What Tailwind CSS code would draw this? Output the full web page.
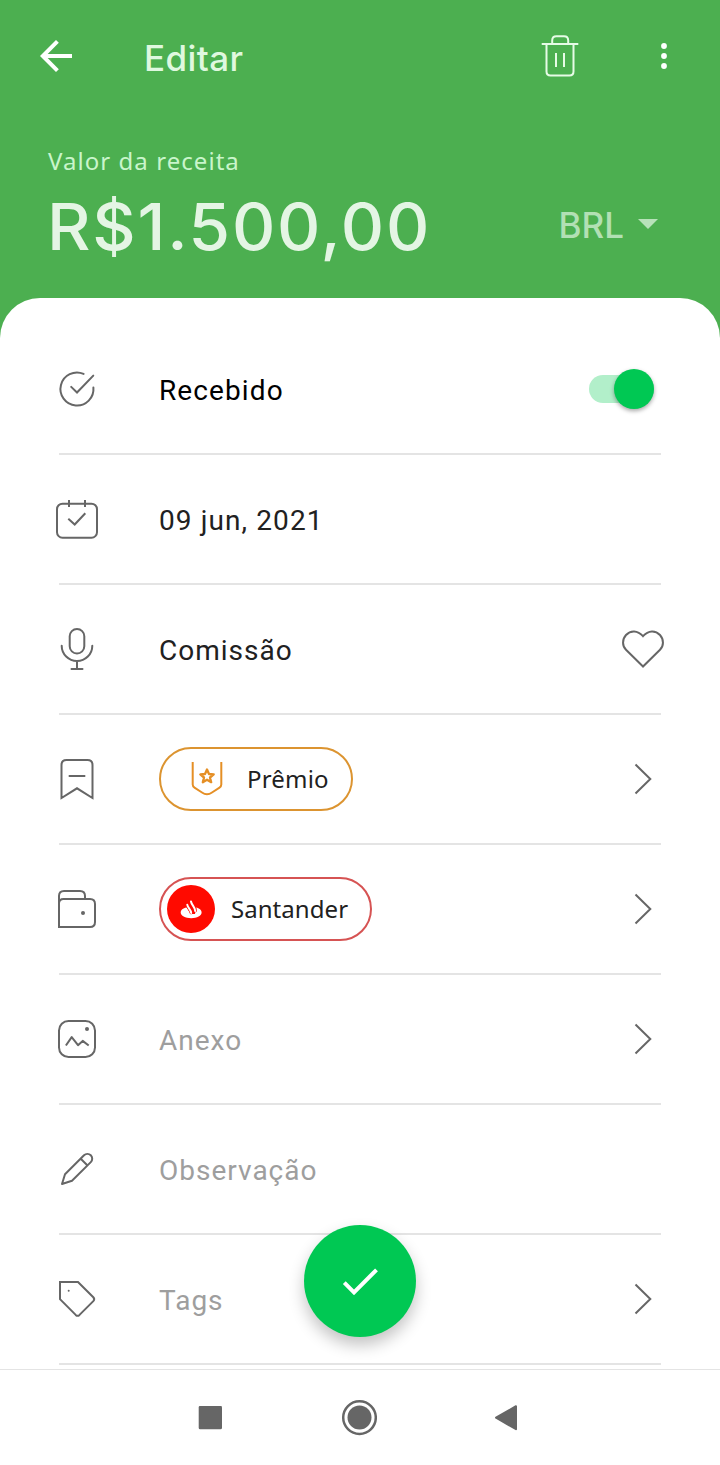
<!DOCTYPE html>
<html lang="pt-BR">
<head>
<meta charset="utf-8">
<title>Editar</title>
<script src="https://cdn.jsdelivr.net/npm/@tailwindcss/browser@4"></script>
</head>
<body class="bg-[#4caf50]">
<div class="relative flex h-[1465px] w-[720px] flex-col overflow-hidden bg-[#4caf50]">
  <header class="flex h-[298px] shrink-0 flex-col">
    <div class="flex h-28 items-center pl-10">
      <svg class="h-8 w-8 shrink-0 text-white" viewBox="0 0 32 32" fill="none" stroke="currentColor" stroke-width="4"><path d="M32 16H3M17.4 1.4L2.8 16l14.6 14.6"/></svg>
      <h1 class="ml-[72px] mt-[3px] font-[Inter] text-[35px] font-medium leading-[42px] tracking-[0.4px] text-[#dff8df]">Editar</h1>
      <div class="ml-auto flex items-center">
        <svg class="h-[44px] w-[40px] text-[#e6fbe6]" viewBox="540 34 40 44" fill="none" stroke="currentColor" stroke-width="2"><path d="M541.7 44H578.3M546.500 44V71.500Q546.500 75.500 550.500 75.500H569.500Q573.500 75.500 573.500 71.500V44M552.200 44V40.500Q552.200 36.300 556.400 36.300H564Q568.200 36.300 568.200 40.500V44M556 53V67M564 53V67"/></svg>
        <svg class="ml-[80px] mr-[52px] h-8 w-2 overflow-visible text-white" viewBox="0 0 8 32" fill="currentColor"><circle cx="4" cy="6" r="2.900"/><circle cx="4" cy="16" r="2.900"/><circle cx="4" cy="26" r="2.900"/></svg>
      </div>
    </div>
    <p class="ml-12 mt-[33px] font-['Noto_Sans'] text-[24px] leading-8 tracking-[1.05px] text-[#c9f5cb]">Valor da receita</p>
    <div class="flex h-24 items-center pl-[47px]">
      <p class="mt-[4px] origin-left scale-x-[1.05] font-[Inter] text-[64px] font-medium leading-[80px] tracking-[1.7px] text-[#e4f5e4]">R$1.500,00</p>
      <div class="ml-auto mr-[62px] flex items-center">
        <span class="font-[Inter] text-[35px] font-medium leading-10 text-[#b2e0b4]">BRL</span>
        <svg class="ml-[14px] h-[10px] w-5 -translate-y-px" viewBox="0 0 20 10" fill="#b7e2b9"><path d="M0 0H20L10 10Z"/></svg>
      </div>
    </div>
  </header>

  <main class="flex h-[1071px] shrink-0 flex-col rounded-t-[40px] bg-white px-[59px] pt-[27px] font-[Roboto] text-[28px] leading-9 tracking-[1px] text-[#212121]">
    <div class="flex h-[130px] shrink-0 items-center border-b-2 border-[#e4e4e4]">
      <svg class="h-9 w-9 shrink-0 overflow-visible" viewBox="0 0 36 36" fill="none" stroke="#666" stroke-width="2" stroke-linecap="round"><path d="M24.600 2.900A16.500 16.500 0 1 0 34.400 16.500M12.200 15.900L18 21.500L34.300 4.600"/></svg>
      <span class="ml-16 mt-[3px] tracking-[1.1px] text-black">Recebido</span>
      <span class="ml-auto mr-[7px] flex h-7 w-[65px] items-center justify-end rounded-full bg-[#b2efca]"><span class="h-10 w-10 rounded-full bg-[#00c853] shadow-[0_2px_4px_rgba(0,0,0,0.35)]"></span></span>
    </div>
    <div class="flex h-[130px] shrink-0 items-center border-b-2 border-[#e4e4e4]">
      <svg class="h-9 w-9 shrink-0 overflow-visible" viewBox="0 0 36 36" fill="none" stroke="#666" stroke-width="2"><rect x="-2" y="2.700" width="40" height="34" rx="5.500"/><path d="M10-1V6M26-1V6M9.300 17.700L15.700 23.500L26.300 12.300"/></svg>
      <span class="ml-16 mt-[3px] tracking-[1.1px]">09 jun, 2021</span>
    </div>
    <div class="flex h-[130px] shrink-0 items-center border-b-2 border-[#e4e4e4]">
      <svg class="h-9 w-9 shrink-0 overflow-visible" viewBox="0 0 36 36" fill="none" stroke="#666" stroke-width="2" stroke-linecap="round"><rect x="10.700" y="-2" width="14.600" height="24.500" rx="7.300"/><path d="M2.700 14.700A15.300 15.300 0 0 0 33.300 14.700M18 30V38M12.500 38H23.500"/></svg>
      <span class="ml-16 mt-[3px]">Comissão</span>
      <svg class="-mr-1 ml-auto h-10 w-11" viewBox="621 629 44 40" fill="none" stroke="#666" stroke-width="2"><path d="M643 666.500L626 649.700C622.200 646 621.900 639.500 626 635C630.500 630.200 637.500 630 643 636.200C648.500 630 655.500 630.200 660 635C664.100 639.500 663.800 646 660 649.700Z"/></svg>
    </div>
    <div class="flex h-[130px] shrink-0 items-center border-b-2 border-[#e4e4e4]">
      <svg class="h-9 w-9 shrink-0 overflow-visible" viewBox="0 0 36 36" fill="none" stroke="#666" stroke-width="2"><path d="M2.500 37V4Q2.500-1 7.500-1H28.500Q33.500-1 33.500 4V37L18 27.300ZM9.700 15H26.300"/></svg>
      <span class="ml-16 flex h-16 w-[194px] items-center rounded-full border-2 border-[#dc9430] pl-[30px]">
        <svg class="h-9 w-8 shrink-0" viewBox="0 0 32 36" fill="none" stroke="#e58f25" stroke-width="2"><path d="M1.700 1V23.500Q1.700 25.500 3.500 26.600L11 31.500Q16 35 21 31.500L28.500 26.600Q30.300 25.500 30.300 23.500V1"/><path stroke-linejoin="round" stroke-width="2.300" d="M16 8.500L18 13L22.700 13.400L19 16.500L20.200 21.200L16 18.700L11.800 21.200L13 16.500L9.300 13.400L14 13Z"/></svg>
        <span class="ml-6 font-['Noto_Sans'] text-[24px] tracking-[0.2px]">Prêmio</span>
      </span>
      <svg class="ml-auto mr-[9px] h-8 w-[18px]" viewBox="0 0 18 32" fill="none" stroke="#666" stroke-width="2"><path d="M1.500 1.500L16.300 16L1.500 30.500"/></svg>
    </div>
    <div class="flex h-[130px] shrink-0 items-center border-b-2 border-[#e4e4e4]">
      <svg class="h-9 w-9 shrink-0 overflow-visible" viewBox="0 0 36 36" fill="none" stroke="#666" stroke-width="2"><path d="M0 12.500Q0 8 4.500 8H31Q36 8 36 13V31Q36 36 31 36H0V5Q0 0 5 0H21Q26 0 26 5V8"/><circle cx="24" cy="22" r="2" fill="#666" stroke="none"/></svg>
      <span class="ml-16 flex h-16 w-[213px] items-center rounded-full border-2 border-[#d65353] pl-[6px]">
        <svg class="h-12 w-12 shrink-0" viewBox="0 0 48 48"><circle cx="24" cy="24" r="24" fill="#ff0a00"/><path fill="#fff" d="M19.500 22.500C16 23 13.700 25.200 13.700 27.600C13.700 30.800 18.300 33.200 24.200 33.200S34.600 30.800 34.600 27.600C34.600 25.200 32.300 23.200 29 22.600L28 29H24Z"/><path fill="none" stroke="#ff0a00" stroke-width="3.400" stroke-linecap="round" d="M20.800 20.500C21.500 23 23.500 25 24.200 27.500M25 17C25.500 20.500 28.500 22.500 28.200 25.500"/><path fill="none" stroke="#fff" stroke-width="2" stroke-linecap="round" d="M20.300 19.800C20.500 22.500 24 24.500 24.200 28M24 16.500C24.500 20 28.500 22.500 28.200 26"/></svg>
        <span class="ml-4 font-['Noto_Sans'] text-[24px] tracking-[0.05px]">Santander</span>
      </span>
      <svg class="ml-auto mr-[9px] h-8 w-[18px]" viewBox="0 0 18 32" fill="none" stroke="#666" stroke-width="2"><path d="M1.500 1.500L16.300 16L1.500 30.500"/></svg>
    </div>
    <div class="flex h-[130px] shrink-0 items-center border-b-2 border-[#e4e4e4]">
      <svg class="h-9 w-9 shrink-0 overflow-visible" viewBox="0 0 36 36" fill="none" stroke="#666" stroke-width="2"><rect x="0" y="0" width="36" height="36" rx="9.500"/><path stroke-linejoin="round" d="M6.900 24.500L12.700 16.100L19 24.200L23.700 19.900L29.700 24.500"/><circle cx="28" cy="8" r="2" fill="#666" stroke="none"/></svg>
      <span class="ml-16 mt-[3px] text-[#9e9e9e]">Anexo</span>
      <svg class="ml-auto mr-[9px] h-8 w-[18px]" viewBox="0 0 18 32" fill="none" stroke="#666" stroke-width="2"><path d="M1.500 1.500L16.300 16L1.500 30.500"/></svg>
    </div>
    <div class="flex h-[130px] shrink-0 items-center border-b-2 border-[#e4e4e4]">
      <svg class="h-9 w-9 shrink-0 overflow-visible" viewBox="0 0 36 36" fill="none" stroke="#666" stroke-width="2" stroke-linejoin="round"><path d="M3 33L6 23.300L25 4.300A4.800 4.800 0 0 1 31.800 11.100L13 29.700ZM22 8L28 14"/></svg>
      <span class="ml-16 mt-[3px] text-[#9e9e9e]">Observação</span>
    </div>
    <div class="flex h-[130px] shrink-0 items-center border-b-2 border-[#e4e4e4]">
      <svg class="h-9 w-9 shrink-0 overflow-visible" viewBox="0 0 36 36" fill="none" stroke="#666" stroke-width="2"><path d="M1 1H19L34.300 16.300Q36.100 18.200 34.300 20.100L20.500 33.900Q18.600 35.700 16.700 33.900L1 18.200Z"/><circle cx="9.700" cy="9.700" r="1" fill="#666" stroke="none"/></svg>
      <span class="ml-16 mt-[3px] text-[#9e9e9e]">Tags</span>
      <svg class="ml-auto mr-[9px] h-8 w-[18px]" viewBox="0 0 18 32" fill="none" stroke="#666" stroke-width="2"><path d="M1.500 1.500L16.300 16L1.500 30.500"/></svg>
    </div>
  </main>

  <nav class="flex h-24 shrink-0 items-center border-t border-[#e4e4e4] bg-white">
    <svg class="ml-[198px] h-6 w-6" viewBox="0 0 24 24"><rect x=".7" y="-.1" width="23.300" height="23.300" rx="1.500" fill="#666"/></svg>
    <svg class="ml-[119px] h-9 w-9" viewBox="0 0 36 36"><circle cx="18.500" cy="17.600" r="16.300" fill="none" stroke="#666" stroke-width="2.500"/><circle cx="18.500" cy="17.600" r="12" fill="#666"/></svg>
    <svg class="ml-[117px] h-[26px] w-6" viewBox="0 0 24 26"><path d="M2 12.700L22 1.200V24.200Z" fill="#666" stroke="#666" stroke-width="2" stroke-linejoin="round"/></svg>
  </nav>

  <button aria-label="Salvar" class="absolute left-[304px] top-[1225px] flex h-28 w-28 items-center justify-center rounded-full bg-[#00c853] shadow-[0_8px_16px_rgba(0,0,0,0.24)]">
    <svg class="h-7 w-9" viewBox="342 1267 36 28" fill="none" stroke="#fff" stroke-width="4"><path d="M344.300 1282.700L354 1292.400L376.500 1269.800"/></svg>
  </button>
</div>
</body>
</html>
